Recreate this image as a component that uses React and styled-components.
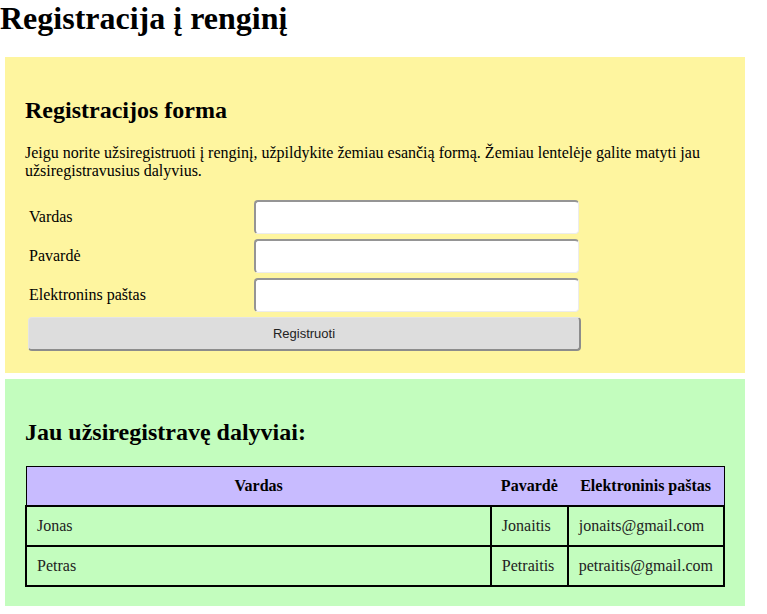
import styled, { createGlobalStyle } from "styled-components";

const GlobalStyle = createGlobalStyle`
body {
    margin: 0;
    font-family: "Liberation Serif", "Times New Roman", serif;
    background: #fff;
    color: #000;
}
`;

const Title = styled.h1`
font-size: 32px;
margin: 0 0 20px 0;
line-height: 37px;
`;

const Section = styled.section`
background-color: ${(p) => p.bg};
margin: 0 22px 6px 5px;
padding: 20px 20px ${(p) => p.bottom || 20}px 20px;
`;

const Heading = styled.h2`
font-size: 24px;
margin: 20px 0;
`;

const Text = styled.p`
font-size: 16px;
margin: 0 0 20px 0;
line-height: 18px;
`;

const Form = styled.form`
display: grid;
grid-template-columns: 224px 327px;
column-gap: 2px;
row-gap: 5px;
padding-left: 3px;
`;

const Label = styled.label`
font-size: 16px;
padding-left: 1px;
display: flex;
align-items: center;
`;

const Input = styled.input`
width: 325px;
height: 34px;
box-sizing: border-box;
background: #fff;
border-style: solid;
border-width: 2px 1px 1px 2px;
border-color: #959595 #ececec #ececec #959595;
border-radius: 4px;
`;

const Button = styled.button`
grid-column: 1 / span 2;
width: 553px;
height: 34px;
background: #dddddd;
border-style: solid;
border-width: 1px 2px 2px 1px;
border-color: #e4e4e4 #8c8c8c #8c8c8c #e4e4e4;
border-radius: 4px;
font-family: "Liberation Sans", Arial, sans-serif;
font-size: 13px;
color: #222;
`;

const Table = styled.table`
width: 100%;
border-collapse: collapse;
border: 1px solid #000;
font-size: 16px;
`;

const Th = styled.th`
background: #c8bbff;
padding: 10px;
line-height: 18px;
white-space: nowrap;
width: ${(p) => (p.wide ? "100%" : "auto")};
`;

const Td = styled.td`
border: 2px solid #000;
padding: 10px;
line-height: 18px;
color: #222;
white-space: nowrap;
`;

const people = [
    { name: "Jonas", surname: "Jonaitis", email: "jonaits@gmail.com" },
    { name: "Petras", surname: "Petraitis", email: "petraitis@gmail.com" },
];

const App = () => {
return (
    <>
    <GlobalStyle />
    <Title>Registracija į renginį</Title>
    <Section bg="#fef59f" bottom={22}>
        <Heading>Registracijos forma</Heading>
        <Text>
            Jeigu norite užsiregistruoti į renginį, užpildykite žemiau esančią formą. Žemiau lentelėje galite matyti jau užsiregistravusius dalyvius.
        </Text>
        <Form onSubmit={(e) => e.preventDefault()}>
            <Label>Vardas</Label>
            <Input type="text" />
            <Label>Pavardė</Label>
            <Input type="text" />
            <Label>Elektronins paštas</Label>
            <Input type="email" />
            <Button type="submit">Registruoti</Button>
        </Form>
    </Section>
    <Section bg="#c3fdbe" bottom={19}>
        <Heading>Jau užsiregistravę dalyviai:</Heading>
        <Table>
            <thead>
                <tr>
                    <Th wide>Vardas</Th>
                    <Th>Pavardė</Th>
                    <Th>Elektroninis paštas</Th>
                </tr>
            </thead>
            <tbody>
                {people.map((p) => (
                    <tr key={p.email}>
                        <Td>{p.name}</Td>
                        <Td>{p.surname}</Td>
                        <Td>{p.email}</Td>
                    </tr>
                ))}
            </tbody>
        </Table>
    </Section>
    </>
);
};

export default App;
